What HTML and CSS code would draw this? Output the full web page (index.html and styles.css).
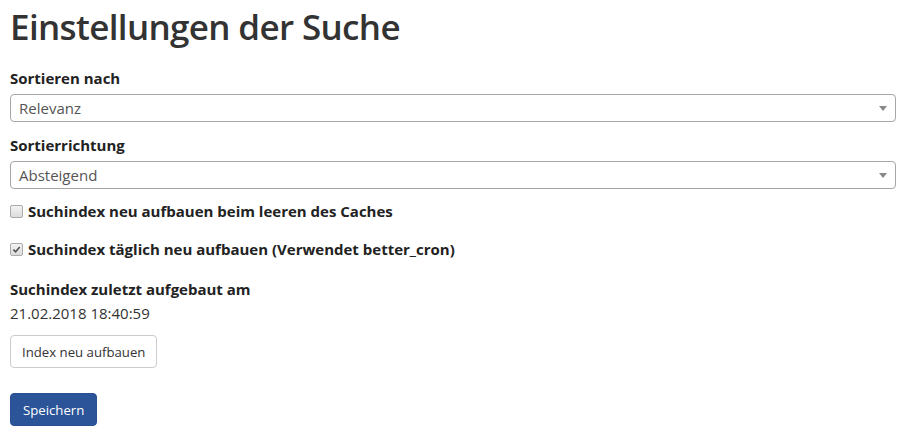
FILE: index.html
```html
<!DOCTYPE html>
<html lang="de">
<head>
<meta charset="utf-8">
<title>Einstellungen der Suche</title>
<link rel="stylesheet" href="styles.css">
</head>
<body>
<div class="page">
  <h1 class="title">Einstellungen der Suche</h1>
  <div class="field">
    <label class="label">Sortieren nach</label>
    <div class="select"><span>Relevanz</span><i class="caret"></i></div>
  </div>
  <div class="field">
    <label class="label">Sortierrichtung</label>
    <div class="select"><span>Absteigend</span><i class="caret"></i></div>
  </div>
  <label class="check"><span class="box"></span>Suchindex neu aufbauen beim leeren des Caches</label>
  <label class="check"><span class="box checked"><svg viewBox="0 0 10 10" width="9" height="9"><path d="M1.5 5.2 L4 7.6 L8.6 2.2" fill="none" stroke="#555" stroke-width="1.8"/></svg></span>Suchindex täglich neu aufbauen (Verwendet better_cron)</label>
  <div class="info">
    <div class="label">Suchindex zuletzt aufgebaut am</div>
    <div class="value">21.02.2018 18:40:59</div>
  </div>
  <button class="btn btn-default">Index neu aufbauen</button>
  <button class="btn btn-primary">Speichern</button>
</div>
</body>
</html>
```
FILE: styles.css
```css
html, body {
  margin: 0;
  padding: 0;
  background: #fff;
}
body {
  font-family: "Open Sans", "Liberation Sans", sans-serif;
  color: #333;
  font-size: 15px;
}
.page {
  padding: 0 9px 0 10px;
  display: flex;
  flex-direction: column;
  align-items: flex-start;
}
.title {
  font-size: 35px;
  font-weight: 600;
  margin: 2px 0 0 0;
  line-height: 50px;
  color: #333;
  letter-spacing: -0.65px;
}
.field {
  width: 100%;
  margin-top: 16px;
}
.field + .field {
  margin-top: 13px;
}
.label {
  display: block;
  font-weight: 700;
  font-size: 15px;
  line-height: 20px;
  color: #222;
}
.select {
  margin-top: 6px;
  height: 28px;
  box-sizing: border-box;
  border: 1px solid #a6a6a6;
  border-radius: 4px;
  display: flex;
  align-items: center;
  justify-content: space-between;
  padding: 0 8px 0 8px;
  font-size: 15px;
  color: #555;
}
.caret {
  width: 0;
  height: 0;
  border-left: 4px solid transparent;
  border-right: 4px solid transparent;
  border-top: 5px solid #888;
}
.check {
  display: flex;
  align-items: center;
  font-weight: 700;
  font-size: 15px;
  line-height: 20px;
  color: #222;
  margin-top: 12px;
}
.check + .check {
  margin-top: 18px;
}
.box {
  width: 11px;
  height: 11px;
  border: 1px solid #aaa;
  border-radius: 2px;
  background: linear-gradient(#f3f3f3, #dcdcdc);
  margin-right: 5px;
  display: flex;
  align-items: center;
  justify-content: center;
}
.info {
  margin-top: 20px;
}
.value {
  font-size: 15px;
  line-height: 20px;
  margin-top: 4px;
  color: #333;
}
.btn {
  font-family: "Open Sans", "Liberation Sans", sans-serif;
  font-size: 13.2px;
  border-radius: 4px;
  padding: 0 11px;
  height: 33px;
  cursor: pointer;
}
.btn-default {
  margin-top: 12px;
  background: #fff;
  border: 1px solid #ccc;
  color: #333;
}
.btn-primary {
  margin-top: 25px;
  background: #2c5499;
  border: 1px solid #2a5094;
  color: #fff;
  padding: 0 12px;
}
```
